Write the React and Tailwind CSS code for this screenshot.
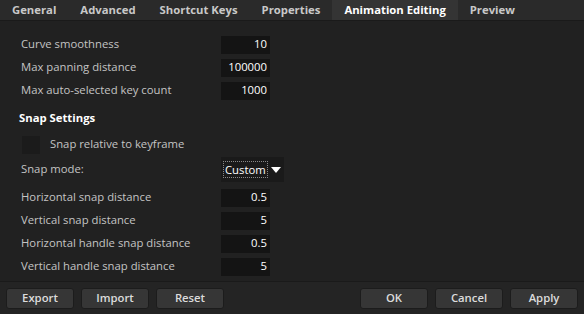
import React from "react";

const tabs = ["General", "Advanced", "Shortcut Keys", "Properties", "Animation Editing", "Preview"];

function NumBox({ value }) {
  return (
    <div className="flex h-[18px] w-[49px] shrink-0 items-center justify-end bg-[#141414] pr-[3px] text-white">
      {value}
    </div>
  );
}

function Row({ label, children }) {
  return (
    <div className="flex h-[23px] items-center">
      <div className="w-[221px] shrink-0 whitespace-nowrap pl-[21px] text-[#c4c4c4]">{label}</div>
      {children}
    </div>
  );
}

function Btn({ children }) {
  return (
    <button
      type="button"
      className="h-[21px] w-[68px] rounded-[3px] border border-[#1c1c1c] bg-[#363636] font-semibold text-[#dcdcdc]"
    >
      {children}
    </button>
  );
}

export default function App() {
  return (
    <div
      className="flex h-[314px] w-[584px] flex-col bg-[#212121] text-[11.3px]"
      style={{ fontFamily: '"Open Sans", "Noto Sans", sans-serif' }}
    >
      {/* tab strip */}
      <div className="flex h-[21px] border-b border-[#1a1a1a] bg-[#2a2a2a]">
        {tabs.map((t) => (
          <div
            key={t}
            className={
              t === "Animation Editing"
                ? "flex items-center bg-[#343434] px-[12px] font-bold text-white"
                : "flex items-center px-[12px] font-bold text-[#c8c8c8]"
            }
          >
            {t}
          </div>
        ))}
      </div>

      <div className="flex flex-1 flex-col pt-[12px]">
        <Row label="Curve smoothness">
          <NumBox value="10" />
        </Row>
        <Row label="Max panning distance">
          <NumBox value="100000" />
        </Row>
        <Row label="Max auto-selected key count">
          <NumBox value="1000" />
        </Row>

        <div className="mt-[6px] flex h-[20px] items-center pl-[19px] font-bold text-white">Snap Settings</div>

        <div className="mt-[8px] flex h-[18px] items-center pl-[22px]">
          <div className="h-[18px] w-[18px] bg-[#1b1b1b]" />
          <span className="ml-[10px] -translate-y-[1px] text-[#c4c4c4]">Snap relative to keyframe</span>
        </div>

        <div className="mt-[3px] flex h-[25px] items-center">
          <div className="w-[221px] shrink-0 pl-[21px] text-[#c4c4c4]">Snap mode:</div>
          <div className="flex h-[25px] w-[63px] items-center bg-[#1a1a1a] pl-[2px]">
            <span className="border border-dotted border-[#888] px-[1px] leading-[15px] text-white">Custom</span>
            <svg width="10" height="6" viewBox="0 0 10 6" className="ml-[3px]">
              <path d="M0 0h10L5 6z" fill="#fff" />
            </svg>
          </div>
        </div>

        <div className="mt-[4px]">
          <Row label="Horizontal snap distance">
            <NumBox value="0.5" />
          </Row>
          <Row label="Vertical snap distance">
            <NumBox value="5" />
          </Row>
          <Row label="Horizontal handle snap distance">
            <NumBox value="0.5" />
          </Row>
          <Row label="Vertical handle snap distance">
            <NumBox value="5" />
          </Row>
        </div>
      </div>

      {/* bottom buttons */}
      <div className="flex h-[33px] items-center justify-between border-t border-[#1a1a1a] bg-[#242424] px-[6px]">
        <div className="flex gap-[7px]">
          <Btn>Export</Btn>
          <Btn>Import</Btn>
          <Btn>Reset</Btn>
        </div>
        <div className="flex gap-[7px]">
          <Btn>OK</Btn>
          <Btn>Cancel</Btn>
          <Btn>Apply</Btn>
        </div>
      </div>
    </div>
  );
}
